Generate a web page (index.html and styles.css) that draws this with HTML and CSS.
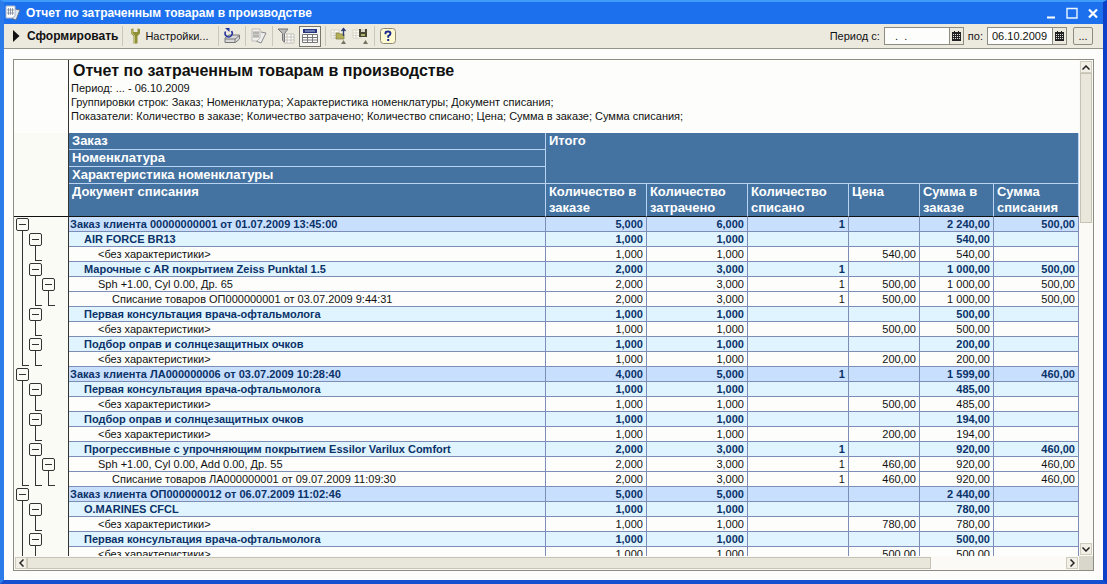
FILE: index.html
```html
<!DOCTYPE html>
<html lang="ru">
<head>
<meta charset="utf-8">
<title>Отчет по затраченным товарам в производстве</title>
<link rel="stylesheet" href="styles.css">
</head>
<body>
<div class="window">
  <header class="titlebar">
    <svg class="app-icon" width="16" height="16" viewBox="0 0 16 16"><path d="M10 4l5 1-4 10-5-2z" fill="#dfe6f2" stroke="#5f6f8a"/><path d="M1 1h9v10l-3 2H1z" fill="#fff" stroke="#a9b6c8"/><path d="M3.500 3v7M5.500 3v7M7.500 3v7M2 5h7M2 8h7" stroke="#7c8798" stroke-width=".8"/></svg>
    <h1>Отчет по затраченным товарам в производстве</h1>
    <div class="win-buttons">
      <button aria-label="Свернуть"><svg width="12" height="12" viewBox="0 0 12 12"><path d="M2 10.500h8" stroke="#fff" stroke-width="2"/></svg></button>
      <button aria-label="Развернуть"><svg width="12" height="12" viewBox="0 0 12 12"><path d="M1 1.500h10v9.500H1z" fill="none" stroke="#e8f6ff" stroke-width="1.400"/></svg></button>
      <button aria-label="Закрыть"><svg width="12" height="12" viewBox="0 0 12 12"><path d="M2 2.500l8 8M10 2.500l-8 8" stroke="#fff" stroke-width="2.200"/></svg></button>
    </div>
  </header>

  <div class="toolbar">
    <button class="tool run"><svg width="7" height="12" viewBox="0 0 7 12"><path d="M0 0l6.500 6L0 12z" fill="#111"/></svg><span>Сформировать</span></button>
    <i class="sep"></i>
    <button class="tool settings"><svg width="11" height="16" viewBox="0 0 11 16"><path d="M1 1l2.500-.5V4h4V.5L10 1v4.500L7.500 8v7.500h-4V8L1 5.500z" fill="#8f9038"/><path d="M2 1.500V5l2.500 2.500V15" fill="none" stroke="#c3c377"/></svg><span>Настройки...</span></button>
    <i class="sep"></i>
    <button class="tool" aria-label="Обновить"><svg width="18" height="16" viewBox="0 0 18 16"><path d="M2 10l4-3h10.500v4l-4 3.500H2z" fill="#d9d9d9" stroke="#777"/><path d="M2 11h10l4.500-3.500M12 11v3" stroke="#777" fill="none"/><path d="M8.500 3a3.600 3.600 0 1 1-6 .5" fill="none" stroke="#24349a" stroke-width="1.500"/><path d="M2 0h4.500v4z" fill="#24349a"/></svg></button>
    <i class="sep"></i>
    <button class="tool" aria-label="Варианты отчета"><svg width="18" height="16" viewBox="0 0 18 16"><path d="M11 4l5 1-5 10-5-2" fill="#eee" stroke="#888"/><path d="M2 1h8v9l-3 3H2z" fill="#f2f0ea" stroke="#bbb"/><path d="M4 3v7M6 3v7M8 3v7M3 5h6M3 8h6" stroke="#888" stroke-width=".7"/></svg></button>
    <i class="sep"></i>
    <button class="tool" aria-label="Отбор"><svg width="18" height="16" viewBox="0 0 18 16"><path d="M7 6h10v9H7zM7 9h10M7 12h10M10 6v9M14 6v9" fill="#fff" stroke="#c4c1b8"/><path d="M1 1h10L7.500 5.500V14l-2-1.500v-7z" fill="#bbb" stroke="#777"/></svg></button>
    <button class="tool pressed" aria-label="Заголовок отчета" aria-pressed="true"><svg width="18" height="16" viewBox="0 0 18 16"><path d="M2 1h14v4H2z" fill="#27367f"/><path d="M4 3h10" stroke="#aebbe8"/><path d="M1.500 6.500h15v8h-15z" fill="#fff" stroke="#777"/><path d="M1 9.500h16M1 12h16M6.500 7v7M11.500 7v7" stroke="#777"/></svg></button>
    <i class="sep"></i>
    <button class="tool" aria-label="Загрузить настройки"><svg width="18" height="18" viewBox="0 0 18 18"><path d="M1 3h8v8H1zM1 6h8M1 8.500h8M4 3v8" fill="#fff" stroke="#d6d2c4"/><path d="M6 6h3l1 1h4v5H6z" fill="#b5ae56" stroke="#7d7a3c" stroke-width=".7"/><path d="M13.500 9V2M11.500 4l2-2.500 2 2.500" fill="none" stroke="#2b3a6e" stroke-width="1.300"/><path d="M11 17l2.500-4 2.500 4z" fill="#77745f"/></svg></button>
    <button class="tool" aria-label="Сохранить настройки"><svg width="18" height="18" viewBox="0 0 18 18"><path d="M1 3h8v8H1zM1 6h8M1 8.500h8M4 3v8" fill="#fff" stroke="#d6d2c4"/><path d="M7 2h8v8H7z" fill="#464632"/><path d="M9 2h4v3H9z" fill="#d8d8c8"/><path d="M9 7h4v2H9z" fill="#a9b06e"/><path d="M11 17l2.500-4 2.500 4z" fill="#77745f"/></svg></button>
    <i class="sep"></i>
    <button class="tool" aria-label="Справка"><svg width="16" height="16" viewBox="0 0 16 16"><rect x=".5" y=".5" width="15" height="15" rx="3" fill="#fffbd0" stroke="#8c8a74"/><path d="M5.500 6.200V5q0-1.500 2.500-1.500T10.500 5.500Q10.500 7 8.200 8v1.800" fill="none" stroke="#1c2a8c" stroke-width="1.900"/><path d="M7.200 11h2v2h-2z" fill="#1c2a8c"/></svg></button>
    <div class="period">
      <label for="from">Период с:</label>
      <div class="date"><input id="from" type="text" value="  .  ."><button aria-label="Календарь"><svg width="9" height="10" viewBox="0 0 9 10"><path d="M0 1h9v9H0zM2 0h1v1H2zM6 0h1v1H6z" fill="#222"/><path d="M1 3.500h7M1 5.500h7M1 7.500h7" stroke="#ddd" stroke-dasharray="1 1"/></svg></button></div>
      <label for="to">по:</label>
      <div class="date"><input id="to" type="text" value="06.10.2009"><button aria-label="Календарь"><svg width="9" height="10" viewBox="0 0 9 10"><path d="M0 1h9v9H0zM2 0h1v1H2zM6 0h1v1H6z" fill="#222"/><path d="M1 3.500h7M1 5.500h7M1 7.500h7" stroke="#ddd" stroke-dasharray="1 1"/></svg></button></div>
      <button class="more" aria-label="Выбрать период">...</button>
    </div>
  </div>

  <main class="content">
    <div class="frame">
      <div class="sheet">
        <div class="summary">
          <h2>Отчет по затраченным товарам в производстве</h2>
          <p>Период: ... - 06.10.2009</p>
          <p>Группировки строк: Заказ; Номенклатура; Характеристика номенклатуры; Документ списания;</p>
          <p>Показатели: Количество в заказе; Количество затрачено; Количество списано; Цена; Сумма в заказе; Сумма списания;</p>
        </div>
        <table>
          <colgroup><col class="c-tree"><col><col class="c-qty"><col class="c-qty"><col class="c-qty"><col class="c-price"><col class="c-sum"><col class="c-off"></colgroup>
          <thead>
            <tr><td class="tree" rowspan="4"></td><th>Заказ</th><th colspan="6" rowspan="3">Итого</th></tr>
            <tr><th>Номенклатура</th></tr>
            <tr><th>Характеристика номенклатуры</th></tr>
            <tr class="cols"><th>Документ списания</th><th>Количество в заказе</th><th>Количество затрачено</th><th>Количество списано</th><th>Цена</th><th>Сумма в заказе</th><th>Сумма списания</th></tr>
          </thead>
          <tbody>
            <tr class="order"><td class="tree"><div><button aria-label="Свернуть"></button></div></td><td>Заказ клиента 00000000001 от 01.07.2009 13:45:00</td><td>5,000</td><td>6,000</td><td>1</td><td></td><td>2 240,00</td><td>500,00</td></tr>
            <tr class="item"><td class="tree"><div><i class="line"></i><button aria-label="Свернуть"></button></div></td><td>AIR FORCE BR13</td><td>1,000</td><td>1,000</td><td></td><td></td><td>540,00</td><td></td></tr>
            <tr class="spec"><td class="tree"><div><i class="line"></i><i class="end"></i></div></td><td>&lt;без характеристики&gt;</td><td>1,000</td><td>1,000</td><td></td><td>540,00</td><td>540,00</td><td></td></tr>
            <tr class="item"><td class="tree"><div><i class="line"></i><button aria-label="Свернуть"></button></div></td><td>Марочные с AR покрытием Zeiss Punktal 1.5</td><td>2,000</td><td>3,000</td><td>1</td><td></td><td>1 000,00</td><td>500,00</td></tr>
            <tr class="spec"><td class="tree"><div><i class="line"></i><i class="line"></i><button aria-label="Свернуть"></button></div></td><td>Sph +1.00, Cyl 0.00, Др. 65</td><td>2,000</td><td>3,000</td><td>1</td><td>500,00</td><td>1 000,00</td><td>500,00</td></tr>
            <tr class="doc"><td class="tree"><div><i class="line"></i><i class="end"></i><i class="end"></i></div></td><td>Списание товаров ОП000000001 от 03.07.2009 9:44:31</td><td>2,000</td><td>3,000</td><td>1</td><td>500,00</td><td>1 000,00</td><td>500,00</td></tr>
            <tr class="item"><td class="tree"><div><i class="line"></i><button aria-label="Свернуть"></button></div></td><td>Первая консультация врача-офтальмолога</td><td>1,000</td><td>1,000</td><td></td><td></td><td>500,00</td><td></td></tr>
            <tr class="spec"><td class="tree"><div><i class="line"></i><i class="end"></i></div></td><td>&lt;без характеристики&gt;</td><td>1,000</td><td>1,000</td><td></td><td>500,00</td><td>500,00</td><td></td></tr>
            <tr class="item"><td class="tree"><div><i class="line"></i><button aria-label="Свернуть"></button></div></td><td>Подбор оправ и солнцезащитных очков</td><td>1,000</td><td>1,000</td><td></td><td></td><td>200,00</td><td></td></tr>
            <tr class="spec"><td class="tree"><div><i class="end"></i><i class="end"></i></div></td><td>&lt;без характеристики&gt;</td><td>1,000</td><td>1,000</td><td></td><td>200,00</td><td>200,00</td><td></td></tr>
            <tr class="order"><td class="tree"><div><button aria-label="Свернуть"></button></div></td><td>Заказ клиента ЛА000000006 от 03.07.2009 10:28:40</td><td>4,000</td><td>5,000</td><td>1</td><td></td><td>1 599,00</td><td>460,00</td></tr>
            <tr class="item"><td class="tree"><div><i class="line"></i><button aria-label="Свернуть"></button></div></td><td>Первая консультация врача-офтальмолога</td><td>1,000</td><td>1,000</td><td></td><td></td><td>485,00</td><td></td></tr>
            <tr class="spec"><td class="tree"><div><i class="line"></i><i class="end"></i></div></td><td>&lt;без характеристики&gt;</td><td>1,000</td><td>1,000</td><td></td><td>500,00</td><td>485,00</td><td></td></tr>
            <tr class="item"><td class="tree"><div><i class="line"></i><button aria-label="Свернуть"></button></div></td><td>Подбор оправ и солнцезащитных очков</td><td>1,000</td><td>1,000</td><td></td><td></td><td>194,00</td><td></td></tr>
            <tr class="spec"><td class="tree"><div><i class="line"></i><i class="end"></i></div></td><td>&lt;без характеристики&gt;</td><td>1,000</td><td>1,000</td><td></td><td>200,00</td><td>194,00</td><td></td></tr>
            <tr class="item"><td class="tree"><div><i class="line"></i><button aria-label="Свернуть"></button></div></td><td>Прогрессивные с упрочняющим покрытием Essilor Varilux Comfort</td><td>2,000</td><td>3,000</td><td>1</td><td></td><td>920,00</td><td>460,00</td></tr>
            <tr class="spec"><td class="tree"><div><i class="line"></i><i class="line"></i><button aria-label="Свернуть"></button></div></td><td>Sph +1.00, Cyl 0.00, Add 0.00, Др. 55</td><td>2,000</td><td>3,000</td><td>1</td><td>460,00</td><td>920,00</td><td>460,00</td></tr>
            <tr class="doc"><td class="tree"><div><i class="end"></i><i class="end"></i><i class="end"></i></div></td><td>Списание товаров ЛА000000001 от 09.07.2009 11:09:30</td><td>2,000</td><td>3,000</td><td>1</td><td>460,00</td><td>920,00</td><td>460,00</td></tr>
            <tr class="order"><td class="tree"><div><button aria-label="Свернуть"></button></div></td><td>Заказ клиента ОП000000012 от 06.07.2009 11:02:46</td><td>5,000</td><td>5,000</td><td></td><td></td><td>2 440,00</td><td></td></tr>
            <tr class="item"><td class="tree"><div><i class="line"></i><button aria-label="Свернуть"></button></div></td><td>O.MARINES CFCL</td><td>1,000</td><td>1,000</td><td></td><td></td><td>780,00</td><td></td></tr>
            <tr class="spec"><td class="tree"><div><i class="line"></i><i class="end"></i></div></td><td>&lt;без характеристики&gt;</td><td>1,000</td><td>1,000</td><td></td><td>780,00</td><td>780,00</td><td></td></tr>
            <tr class="item"><td class="tree"><div><i class="line"></i><button aria-label="Свернуть"></button></div></td><td>Первая консультация врача-офтальмолога</td><td>1,000</td><td>1,000</td><td></td><td></td><td>500,00</td><td></td></tr>
            <tr class="spec"><td class="tree"><div><i class="line"></i><i class="end"></i></div></td><td>&lt;без характеристики&gt;</td><td>1,000</td><td>1,000</td><td></td><td>500,00</td><td>500,00</td><td></td></tr>
          </tbody>
        </table>
      </div>
      <div class="scroll vertical">
        <button aria-label="Вверх"><svg width="8" height="5" viewBox="0 0 8 5"><path d="M.5 4.500L4 1l3.500 3.500" fill="none" stroke="#222" stroke-width="1.500"/></svg></button>
        <div class="track"><div class="thumb"></div></div>
        <button aria-label="Вниз"><svg width="8" height="5" viewBox="0 0 8 5"><path d="M.5.5L4 4 7.500.5" fill="none" stroke="#222" stroke-width="1.500"/></svg></button>
      </div>
      <div class="scroll horizontal">
        <button aria-label="Влево"><svg width="5" height="8" viewBox="0 0 5 8"><path d="M4.500.5L1 4l3.500 3.500" fill="none" stroke="#222" stroke-width="1.500"/></svg></button>
        <div class="track"><div class="thumb"></div></div>
        <button aria-label="Вправо"><svg width="5" height="8" viewBox="0 0 5 8"><path d="M.5.5L4 4 .5 7.500" fill="none" stroke="#222" stroke-width="1.500"/></svg></button>
      </div>
      <div class="corner"></div>
    </div>
  </main>
</div>
</body>
</html>
```

FILE: styles.css
```css
* { box-sizing: border-box; }

body {
  margin: 0;
  height: 100vh;
  overflow: hidden;
  font: 11px/14px "Liberation Sans", Arial, sans-serif;
  color: #111;
}

h1, h2, p { margin: 0; }

button {
  display: flex;
  align-items: center;
  justify-content: center;
  padding: 0;
  border: 0;
  background: none;
  font: inherit;
  color: inherit;
}

.window {
  display: flex;
  flex-direction: column;
  height: 100%;
  border: 4px solid #1c66e4;
  border-top-color: #3f9bfb;
  border-top-width: 2px;
  border-left-color: #2c7bea;
  border-right-color: #0c41c8;
  border-bottom-color: #1450cf;
  background: #fdfefb;
}

.titlebar {
  display: flex;
  align-items: center;
  gap: 5px;
  height: 22px;
  padding: 0 4px 0 1px;
  background: #1c70ee;
  color: #fff;
}

.titlebar h1 {
  flex: 1;
  font: bold 12px/16px "Liberation Sans", Arial, sans-serif;
}

.win-buttons { display: flex; gap: 9px; }

.toolbar {
  display: flex;
  align-items: center;
  gap: 4px;
  height: 25px;
  padding: 0 10px 0 9px;
  background: #ece9df;
  border-bottom: 1px solid #96948a;
}

.sep {
  width: 1px;
  height: 20px;
  background: #c9c6bb;
}

.tool { min-width: 18px; height: 20px; gap: 4px; }
.run { gap: 7px; font-weight: bold; font-size: 12px; }
.settings { padding: 0 5px 0 3px; }
.pressed {
  width: 22px;
  height: 21px;
  border: 1px solid #77756c;
  background: #f5f3ee;
}

.period {
  display: flex;
  align-items: center;
  gap: 4px;
  margin-left: auto;
}

.date {
  display: flex;
  width: 80px;
  height: 18px;
  border: 1px solid #8d8b82;
}

.date input {
  flex: 1;
  min-width: 0;
  padding: 0 4px;
  border: 0;
  background: #fdfefb;
  font: inherit;
  color: inherit;
  white-space: pre;
}

.date button {
  width: 14px;
  border-left: 1px solid #8d8b82;
  background: #ece9df;
}

.more {
  width: 20px;
  height: 18px;
  margin-left: 2px;
  border: 1px solid #8d8b82;
  border-radius: 2px;
}

.content {
  display: flex;
  flex: 1;
  min-height: 0;
  padding: 10px 9px 9px;
}

.frame {
  display: grid;
  grid-template: minmax(0, 1fr) 14px / minmax(0, 1fr) 14px;
  flex: 1;
  border: 1px solid #8d8b82;
}

.sheet {
  overflow: hidden;
  background: #fdfefb;
}

.summary {
  height: 73px;
  margin-left: 54px;
  padding-left: 2px;
  border-left: 1px solid #333;
}

.summary h2 {
  padding-left: 2px;
  font: bold 16px/21px "Liberation Sans", Arial, sans-serif;
}

table {
  width: 100%;
  table-layout: fixed;
  border-collapse: separate;
  border-spacing: 0;
}

.c-tree { width: 55px; }
.c-qty { width: 101px; }
.c-price { width: 71px; }
.c-sum { width: 74px; }
.c-off { width: 85px; }

th {
  height: 17px;
  padding: 0 3px;
  border: solid #b9d3f2;
  border-width: 0 1px 1px 0;
  background: #4473a2;
  color: #fff;
  font: bold 13px/16px "Liberation Sans", Arial, sans-serif;
  text-align: left;
  vertical-align: top;
}

.cols th {
  height: 33px;
  border-bottom-color: #111;
}

tbody td {
  height: 15px;
  padding: 0 3px 0 1px;
  border: solid #7c8db8;
  border-width: 0 1px 1px 0;
  line-height: 14px;
  text-align: right;
  white-space: nowrap;
}

tbody td:nth-child(2) { text-align: left; }

.order td { background: #c8dffe; }
.item td { background: #dff4ff; }
.order td, .item td { color: #0b3268; font-weight: bold; }
.item td:nth-child(2) { padding-left: 15px; }
.spec td:nth-child(2) { padding-left: 29px; }
.doc td:nth-child(2) { padding-left: 43px; }

td.tree {
  padding: 0;
  border: 0;
  border-right: 1px solid #333;
  background: #fbfbf6;
}

thead td.tree { border-bottom: 1px solid #111; }

.tree div {
  display: flex;
  height: 15px;
  padding-left: 2px;
}

.tree i, .tree button {
  flex: none;
  position: relative;
  width: 13px;
  height: 15px;
}

.tree i::before, .tree button::after {
  content: "";
  position: absolute;
  left: 6px;
  top: 0;
  bottom: 0;
  border-left: 1px solid #333;
}

.tree .end::before {
  width: 6px;
  bottom: 1px;
  border-bottom: 1px solid #333;
}

.tree button::after { top: 13px; }

.tree button::before {
  content: "";
  width: 11px;
  height: 11px;
  border: 1px solid #333;
  border-radius: 2px;
  background: linear-gradient(#333, #333) center / 7px 1px no-repeat;
}

.scroll { display: flex; background: #fbfaf6; }
.vertical { flex-direction: column; padding: 1px; }
.horizontal { padding: 1px; }

.scroll button {
  flex: none;
  width: 12px;
  height: 12px;
  border: 1px solid #d0ccbd;
  background: #f1efe6;
}

.track { flex: 1; }

.thumb {
  border: 1px solid #c6c2b4;
  background: #e9e6db;
}

.vertical .thumb { height: 32%; }
.horizontal .thumb { width: 87%; height: 12px; }
.corner { background: #d9d6cc; }
```
